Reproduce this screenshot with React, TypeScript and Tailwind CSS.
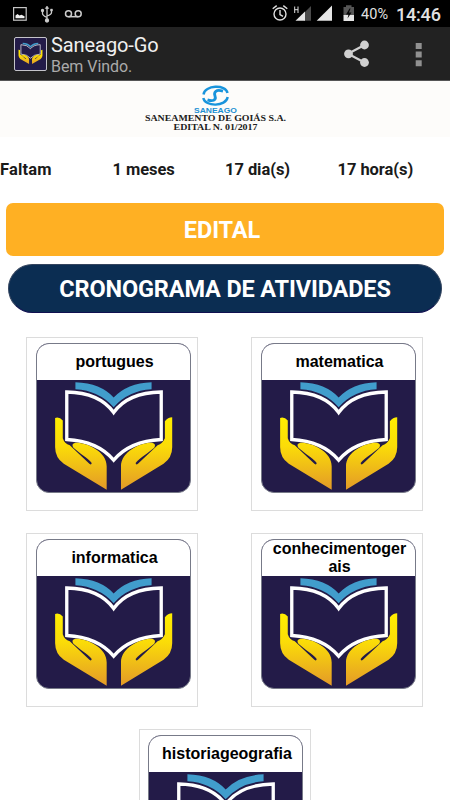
import React from "react";

// Hands holding an open book; x from 48 to 510, y from 150 to 488.
function BookArt({ className, viewBox }: { className: string; viewBox: string }) {
  return (
    <svg className={className} viewBox={viewBox} preserveAspectRatio="none">
      <defs>
        <linearGradient id="gold" gradientUnits="userSpaceOnUse" x1="0" y1="262" x2="0" y2="480">
          <stop offset="0" stopColor="#ffee00" />
          <stop offset="0.4" stopColor="#fbdc08" />
          <stop offset="1" stopColor="#e39a28" />
        </linearGradient>
      </defs>
      <path d="M163 157 Q240 160 278 203 Q318 160 392 157 V178 Q322 182 278 232 Q234 182 163 178Z" fill="#419dcc" />
      <path
        d="M137 186 Q236 188 278 248 Q320 188 421 186 V329 Q326 334 278 391 Q230 334 137 329Z"
        fill="none"
        stroke="#fff"
        strokeWidth="10"
      />
      <g fill="url(#gold)">
        <path d="M102 264 Q115 260 125 272 V325 Q130 341 146 346 L205 402 Q211 407 212 400 Q206 391 180 373 L157 354 Q149 342 163 339 C195 337 258 365 257 410 V480 L128 402 Q102 383 102 352Z" />
        <path d="M454 262 Q441 262 432 274 V325 Q425 341 410 346 L351 402 Q345 407 344 400 Q350 391 376 373 L400 354 Q407 342 393 339 C361 337 300 365 300 410 V480 L428 402 Q454 383 454 352Z" />
      </g>
    </svg>
  );
}

function SubjectCard({ label }: { label: string }) {
  return (
    <div className="h-[174px] w-[172px] shrink-0 border border-[#dcdcdc] bg-white pl-[8.500px] pt-[5px]">
      <div className="flex h-[150px] w-[155px] flex-col overflow-hidden rounded-[13px] border border-[#777a88] bg-[#231b48]">
        <div className="flex h-[36px] shrink-0 items-center justify-center bg-white pl-[10px] pr-[7px] text-center font-['Liberation_Sans',sans-serif] text-[16px] font-bold leading-[18px] text-black">
          <span className="w-[136px] break-all">{label}</span>
        </div>
        <BookArt className="block h-[112px] w-[153px]" viewBox="47.500 150 460 337" />
      </div>
    </div>
  );
}

function StatusBar() {
  return (
    <div className="flex h-[27px] items-center bg-black text-[#e2e2e2]">
      <svg className="h-[27px] w-[360px] shrink-0" viewBox="0 0 360 27" fill="none">
        <rect x="13.6" y="7.6" width="12.6" height="12.6" stroke="#c5c5c5" strokeWidth="1.2" />
        <path d="M15.500 18.300v-2.800l2-1.500 2 1.500 2-0.700 3 1.500v2z" fill="#eee" />
        <g stroke="#ccc" strokeWidth="1.3">
          <path d="M47 8v13M42.500 10v3.500q0 2 4.500 4M51.500 10v2.500q0 2-4.500 3.500" />
          <path d="M45.300 8.500 47 6l1.700 2.500z" fill="#ccc" strokeWidth=".6" />
          <circle cx="42.500" cy="10.500" r="1" fill="#ccc" />
          <path d="M50.500 9h2v2h-2z" fill="#ccc" strokeWidth=".4" />
          <circle cx="47" cy="20.500" r="1.500" fill="#ccc" />
        </g>
        <g stroke="#ccc" strokeWidth="1.5">
          <circle cx="68.500" cy="13.700" r="3" />
          <circle cx="78.200" cy="13.700" r="3" />
          <path d="M68.500 16.700h9.700" />
        </g>
        <g stroke="#e0e0e0" strokeWidth="1.400">
          <circle cx="280" cy="14" r="6" />
          <path d="M280 10v4.500l3 1.800M272.700 8.800l4-3.200M287.300 8.800l-4-3.200" />
        </g>
        <path d="M311 20.700V6l-7 7v7.700z" fill="#4a4a4a" />
        <path d="M295.500 20.700 305 11.500v9.200z" fill="#e5e5e5" />
        <path d="M294.700 6.500v6.500M298 6.500v6.500M294.700 9.700h3.300" stroke="#ddd" strokeWidth="1" />
        <path d="M316.700 20.700H332V5.500z" fill="#e5e5e5" />
        <path d="M343.500 7h2.500V5.300h5.500V7h2.500v8.500h-10.500z" fill="#555" />
        <path d="M343.500 15h10.500v6h-10.500z" fill="#e5e5e5" />
        <path d="M349.600 8.500 346 14.500h2.500l-1 4 4-6h-2.600l1.700-4z" fill="#050505" />
      </svg>
      <span className="mt-[4px] w-[36px] shrink-0 pl-[1px] text-[14.500px] leading-none tracking-[0.150px]">40%</span>
      <span className="mt-[3px] text-[18px] font-medium leading-none tracking-[-0.200px]">14:46</span>
    </div>
  );
}

function ActionBar() {
  return (
    <div className="flex h-[53px] items-center bg-[#222222]">
      <div className="ml-[14px] mt-[1px] h-[34px] w-[33px] shrink-0 overflow-hidden rounded-[2px] border border-[#c4c4ca] bg-[#231b48]">
        <BookArt className="block h-[32px] w-[31px]" viewBox="50 85 456 485" />
      </div>
      <div className="ml-1 mt-[5px] w-[289px] shrink-0">
        <div className="text-[20px] leading-[22px] tracking-[-0.080px] text-[#f0f0f0]">Saneago-Go</div>
        <div className="text-[16px] leading-[22px] tracking-[-0.050px] text-[#aaaaaa]">Bem Vindo.</div>
      </div>
      <svg className="h-[53px] w-[110px] shrink-0" viewBox="340 27 110 53">
        <path d="M364.500 45 348 53.800 364.500 62.500" fill="none" stroke="#d0d0d0" strokeWidth="2.200" />
        <circle cx="364.500" cy="45" r="4.400" fill="#d0d0d0" />
        <circle cx="348.500" cy="53.800" r="4.400" fill="#d0d0d0" />
        <circle cx="364.500" cy="62.500" r="4.400" fill="#d0d0d0" />
        <path d="M415.700 43h6v6h-6zM415.700 51.600h6v6h-6zM415.700 60.200h6v6h-6z" fill="#909090" />
      </svg>
    </div>
  );
}

function Banner() {
  return (
    <div className="h-[57px] border-t border-[#555] bg-[#fdfcfa]">
      <svg className="block h-[56px] w-[450px]" viewBox="0 81 450 56">
        <g fill="none" stroke="#1994dc" strokeWidth="2.400">
          <path d="M203.500 94.500C204.500 85 226 84 227.500 93" />
          <path d="M203.300 98C205 107 226 107 227.700 97" />
          <path d="M223 91.200C216 89 213.500 92 215 96C216.500 100.500 212.500 101.500 207.500 99.800" strokeWidth="2.800" />
        </g>
        <g textAnchor="middle">
          <text x="215.500" y="113" textLength="43" lengthAdjust="spacingAndGlyphs" className="fill-[#1c8fd3] font-['Liberation_Sans',sans-serif] text-[6.500px] font-bold">SANEAGO</text>
          <text x="215.500" y="121.200" textLength="141" lengthAdjust="spacingAndGlyphs" className="fill-[#202020] font-['Liberation_Serif',serif] text-[8px] font-bold">SANEAMENTO DE GOIÁS S.A.</text>
          <text x="215.500" y="129.500" textLength="84" lengthAdjust="spacingAndGlyphs" className="fill-[#202020] font-['Liberation_Serif',serif] text-[8px] font-bold">EDITAL N. 01/2017</text>
        </g>
      </svg>
    </div>
  );
}

export default function App() {
  return (
    <div className="h-[800px] w-[450px] overflow-hidden bg-white font-[Roboto,sans-serif]">
      <StatusBar />
      <ActionBar />
      <Banner />
      <div className="grid h-[66px] grid-cols-4 items-center text-[16.500px] font-bold tracking-[-0.050px] text-[#1a1a1a]">
        <span className="tracking-[0.150px]">Faltam</span>
        <span>1 meses</span>
        <span>17 dia(s)</span>
        <span>17 hora(s)</span>
      </div>
      <button className="ml-[6px] flex h-[53px] w-[438px] items-center justify-center rounded-[7px] bg-[#ffb023] pr-[6px] pt-[2px] text-[23.500px] font-bold tracking-[-0.100px] text-white">
        EDITAL
      </button>
      <button className="ml-[8px] mt-[8px] flex h-[49px] w-[434px] items-center justify-center rounded-full border border-[#34445e] border-b-[#101050] bg-[#0b2d52] pt-[3px] text-[23.500px] font-bold tracking-[-0.140px] text-white">
        CRONOGRAMA DE ATIVIDADES
      </button>
      <div className="mt-[24px] flex flex-wrap justify-center gap-x-[53px] gap-y-[22px] pr-[1px]">
        <SubjectCard label="portugues" />
        <SubjectCard label="matematica" />
        <SubjectCard label="informatica" />
        <SubjectCard label="conhecimentogerais" />
        <SubjectCard label="historiageografia" />
      </div>
    </div>
  );
}
